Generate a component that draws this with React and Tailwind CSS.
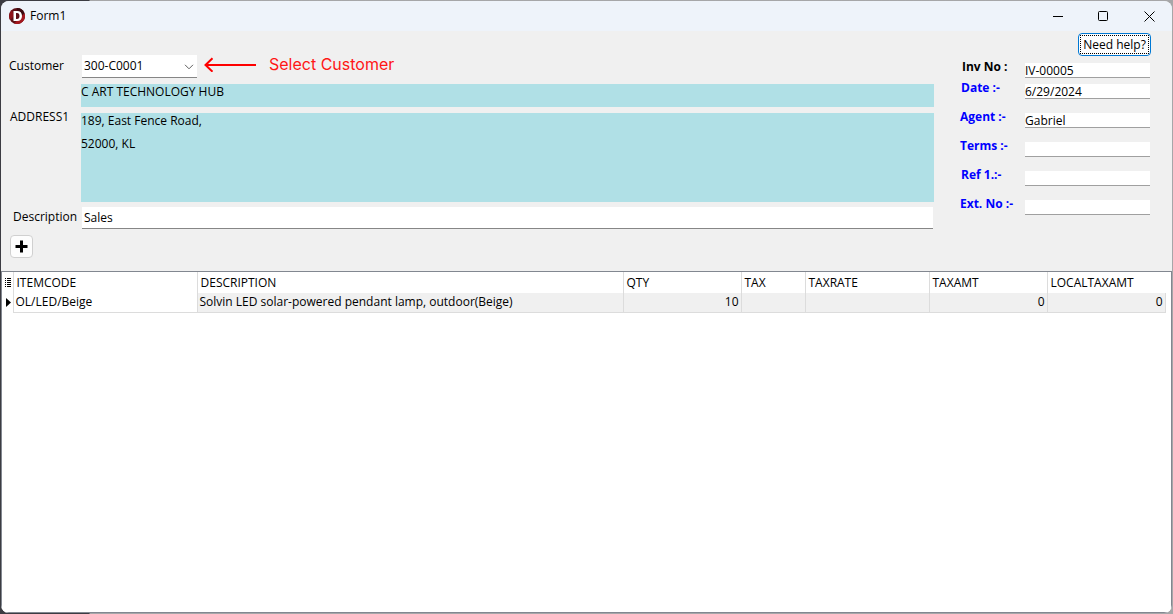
import React from "react";

const details = [
  { id: "inv", label: "Inv No :", value: "IV-00005", tone: "text-black", inset: "pl-[2px]", gap: "mb-[6px]" },
  { id: "date", label: "Date :-", value: "6/29/2024", tone: "text-[#0000ff]", inset: "pl-[1px]", gap: "mb-[14px]" },
  { id: "agent", label: "Agent :-", value: "Gabriel", tone: "text-[#0000ff]", inset: "pl-0", gap: "mb-[14px]" },
  { id: "terms", label: "Terms :-", value: "", tone: "text-[#0000ff]", inset: "pl-0", gap: "mb-[14px]" },
  { id: "ref", label: "Ref 1.:-", value: "", tone: "text-[#0000ff]", inset: "pl-[1px]", gap: "mb-[14px]" },
  { id: "ext", label: "Ext. No :-", value: "", tone: "text-[#0000ff]", inset: "pl-0", gap: "mb-0" },
];

const columns = ["ITEMCODE", "DESCRIPTION", "QTY", "TAX", "TAXRATE", "TAXAMT", "LOCALTAXAMT"];

const rows = [
  ["OL/LED/Beige", "Solvin LED solar-powered pendant lamp, outdoor(Beige)", "10", "", "", "0", "0"],
];

function TitleBar() {
  return (
    <header className="flex h-[30px] shrink-0 items-center bg-[#eef3fa] pl-2">
      <svg viewBox="0 0 16 16" className="size-4" aria-hidden="true">
        <circle cx="8" cy="8" r="8" fill="#5c0f16" />
        <path d="M8 0a8 8 0 0 1 7.500 5.200L12 8L8 2z" fill="#3d0a10" />
        <path d="M15.500 5.200A8 8 0 0 1 5 15.400L12 9z" fill="#a3171f" />
        <path d="M3 2A8 8 0 0 0 1 12L5 8z" fill="#8d1219" />
        <path fillRule="evenodd" d="M4.500 3h3.700c3 0 4.800 1.900 4.800 5s-1.800 5-4.800 5H4.500zM7 5v6h1.100c1.500 0 2.400-1 2.400-3S9.600 5 8.100 5z" fill="#fff" />
      </svg>
      <h1 className="ml-[5px]">Form1</h1>
      <div className="ml-auto flex h-full">
        <button type="button" aria-label="Minimize" className="flex w-[46px] items-center justify-center">
          <svg viewBox="0 0 11 11" className="size-[11px]" shapeRendering="crispEdges">
            <path d="M1 5.500h10" stroke="#000" fill="none" />
          </svg>
        </button>
        <button type="button" aria-label="Maximize" className="flex w-[46px] items-center justify-center">
          <svg viewBox="0 0 11 11" className="size-[11px]">
            <rect x="0.5" y="0.5" width="9" height="9" rx="1" stroke="#000" fill="none" />
          </svg>
        </button>
        <button type="button" aria-label="Close" className="flex w-[46px] items-center justify-center">
          <svg viewBox="0 0 11 11" className="size-[11px]">
            <path d="M0.500 0.500l10 10M10.500 0.500l-10 10" stroke="#000" fill="none" />
          </svg>
        </button>
      </div>
    </header>
  );
}

function CustomerFields() {
  return (
    <div className="grid min-w-0 flex-1 grid-cols-[80px_minmax(0,1fr)] content-start pt-6">
      <label htmlFor="customer" className="pt-[3px] pl-2">Customer</label>
      <div className="flex h-[29px] items-start">
        <div className="relative ml-px">
          <select
            id="customer"
            defaultValue="300-C0001"
            className="block h-[23px] w-[115px] appearance-none border-b border-[#868686] bg-white pl-[2px] outline-none"
          >
            <option>300-C0001</option>
          </select>
          <svg viewBox="0 0 10 6" className="pointer-events-none absolute top-[9px] right-[3px] h-[6px] w-[10px]">
            <path d="M1 0.800l4 4l4-4" stroke="#606060" fill="none" />
          </svg>
        </div>
        <svg viewBox="0 0 52 16" className="mt-px ml-[7px] h-4 w-[52px]" aria-hidden="true">
          <path d="M52 9H2M8.500 2.300L1.500 9l7 6.700" stroke="#fe0000" strokeWidth="2" fill="none" />
        </svg>
        <p className="-mt-px ml-[13px] font-['Inter',sans-serif] text-base leading-5 text-[#ff1616]">Select Customer</p>
      </div>

      <output htmlFor="customer" className="col-start-2 mb-[6px] h-[23px] bg-[#b0e0e6]">C ART TECHNOLOGY HUB</output>

      <span className="-mt-1 pl-[9px]">ADDRESS1</span>
      <address className="mb-[5px] h-[89px] bg-[#b0e0e6] not-italic">
        <p>189, East Fence Road,</p>
        <p className="mt-[7px]">52000, KL</p>
      </address>

      <label htmlFor="description" className="pt-[2px] pl-3">Description</label>
      <input
        id="description"
        defaultValue="Sales"
        className="mx-px h-[22px] min-w-0 border-b border-[#868686] bg-white pl-[2px] outline-none"
      />
    </div>
  );
}

function InvoiceDetails() {
  return (
    <div className="flex w-[190px] shrink-0 flex-col pt-[2px]">
      <button
        type="button"
        className="-mr-px mb-[7px] h-[23px] w-[73px] self-end rounded-[4px] border border-[#0078d4] bg-[#fdfdfd] p-px"
      >
        <span className="flex h-full items-center justify-center border border-dotted border-black whitespace-nowrap">Need help?</span>
      </button>
      {details.map((item) => (
        <div key={item.id} className={`grid h-[15px] grid-cols-[65px_125px] ${item.gap}`}>
          <label htmlFor={item.id} className={`-mt-1 whitespace-nowrap font-bold ${item.tone} ${item.inset}`}>
            {item.label}
          </label>
          <input
            id={item.id}
            defaultValue={item.value}
            className="h-[15px] min-w-0 border-b border-[#a0a0a0] bg-white leading-[14px] outline-none"
          />
        </div>
      ))}
    </div>
  );
}

function ItemGrid() {
  return (
    <div className="flex-1 overflow-hidden border border-[#828790] bg-white">
      <table className="w-[1163px] table-fixed border-collapse">
        <colgroup>
          <col className="w-[11px]" />
          <col className="w-[184px]" />
          <col className="w-[426px]" />
          <col className="w-[118px]" />
          <col className="w-[64px]" />
          <col className="w-[124px]" />
          <col className="w-[118px]" />
          <col className="w-[118px]" />
        </colgroup>
        <thead>
          <tr className="h-[21px]">
            <th aria-label="Row marker" className="border-r border-[#dcdcdc] p-0">
              <svg viewBox="0 0 6 9" className="ml-[3px] h-[9px] w-[6px]" shapeRendering="crispEdges">
                <path d="M0 0.500h1M2 0.500h4M0 2.500h1M2 2.500h4M0 4.500h1M2 4.500h4M0 6.500h1M2 6.500h4M0 8.500h1M2 8.500h4" stroke="#000" />
              </svg>
            </th>
            {columns.map((name) => (
              <th key={name} className="border-r border-[#dcdcdc] p-0 pl-[3px] text-left font-normal last:border-r-0">
                {name}
              </th>
            ))}
          </tr>
        </thead>
        <tbody>
          {rows.map((row) => (
            <tr key={row[0]} className="h-[19px]">
              <td className="border-r border-[#dcdcdc] p-0">
                <svg viewBox="0 0 5 9" className="ml-1 h-[9px] w-[5px]">
                  <path d="M0 0l5 4.500l-5 4.500z" fill="#000" />
                </svg>
              </td>
              {row.map((cell, i) => (
                <td
                  key={columns[i]}
                  className={`border-r border-b border-[#dcdcdc] p-0 px-[2px] whitespace-nowrap ${i === 0 ? "bg-white" : "bg-[#f0f0f0]"} ${i > 1 ? "text-right" : "text-left"}`}
                >
                  {cell}
                </td>
              ))}
            </tr>
          ))}
        </tbody>
      </table>
    </div>
  );
}

export default function App() {
  return (
    <div className="flex h-screen bg-linear-to-r from-[#3c3c42] from-[89px] to-[#a6a6a8] to-[90px] p-px font-['Open_Sans','Noto_Sans',sans-serif] text-xs leading-4 text-black">
      <main className="flex min-w-0 flex-1 flex-col overflow-hidden rounded-lg bg-[#f0f0f0]">
        <TitleBar />
        <section className="flex pr-[22px]">
          <CustomerFields />
          <div className="w-[26px] shrink-0" />
          <InvoiceDetails />
        </section>
        <div className="mt-[6px] mb-[13px] pl-[9px]">
          <button
            type="button"
            aria-label="Add item"
            className="flex size-[23px] items-center justify-center rounded-[4px] border border-[#d0d0d0] bg-[#fdfdfd]"
          >
            <svg viewBox="0 0 13 13" className="size-[13px]">
              <path d="M6.500 0.500v12M0.500 6.500h12" stroke="#000" strokeWidth="3" />
            </svg>
          </button>
        </div>
        <ItemGrid />
      </main>
    </div>
  );
}
